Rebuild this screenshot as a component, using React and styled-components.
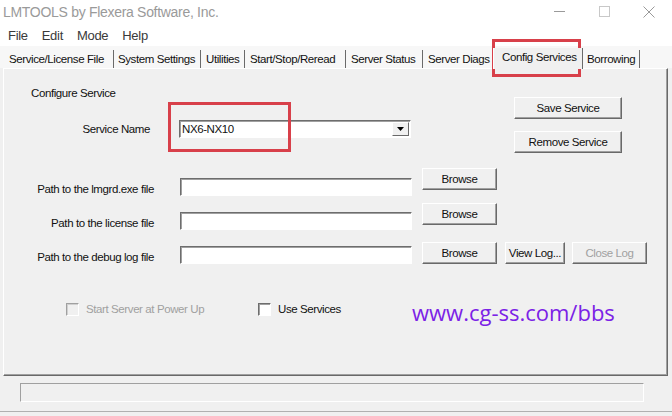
import React from "react";
import styled, { createGlobalStyle } from "styled-components";

const Global = createGlobalStyle`
    html, body {
        margin: 0;
        padding: 0;
        background: #f0f0f0;
    }
    * {
        box-sizing: border-box;
    }
`

const Window = styled.div`
    position: relative;
    width: 672px;
    height: 416px;
    overflow: hidden;
    background: #f0f0f0;
    font-family: "Liberation Sans", Arial, sans-serif;
    font-size: 11.5px;
    letter-spacing: -0.4px;
    color: #111;
`

const TitleBar = styled.div`
    height: 24px;
    display: flex;
    align-items: center;
    background: #fff;
    padding-left: 3px;
`

const Title = styled.span`
    font-size: 14px;
    letter-spacing: -0.3px;
    color: #9a9a9a;
    flex: 1;
`

const Controls = styled.div`
    display: flex;
    align-items: center;
    height: 24px;
    margin-top: -1px;
`

const CtrlBox = styled.div`
    width: ${({ w }) => w}px;
    display: flex;
    justify-content: center;
    align-items: center;
`

const MenuBar = styled.div`
    height: 22px;
    display: flex;
    align-items: center;
    gap: 14px;
    padding-left: 8px;
    background: #fff;
`

const MenuItem = styled.span`
    font-size: 13px;
    letter-spacing: -0.3px;
    color: #3a3a3a;
`

const TabStrip = styled.div`
    height: 22px;
    display: flex;
    align-items: flex-end;
    padding-left: 5px;
    background: #f7f7f7;
`

const Tab = styled.div`
    width: ${({ w }) => w}px;
    height: ${({ active }) => (active ? 21 : 18)}px;
    display: flex;
    align-items: center;
    padding-left: ${({ pl }) => pl}px;
    padding-bottom: ${({ active }) => (active ? 3 : 1)}px;
    border-right: 1px solid #6a6a6a;
    border-left: ${({ active }) => (active ? "1px solid #fff" : "0")};
    background: ${({ active }) => (active ? "#f0f0f0" : "transparent")};
    white-space: nowrap;
    margin-bottom: ${({ active }) => (active ? -1 : 0)}px;
    position: relative;
    z-index: ${({ active }) => (active ? 1 : 0)};
`

const Panel = styled.div`
    margin-left: 3px;
    width: 665px;
    height: 308px;
    border-top: 1px solid #fff;
    border-left: 1px solid #fff;
    border-right: 1px solid #696969;
    border-bottom: 1px solid #696969;
    box-shadow: inset -1px -1px 0 #a0a0a0;
    display: flex;
    flex-direction: column;
`

const TopSection = styled.div`
    display: flex;
    align-items: flex-start;
`

const LeftBlock = styled.div`
    width: 510px;
    display: flex;
    flex-direction: column;
`

const Heading = styled.div`
    margin: 17px 0 0 27px;
    line-height: 14px;
`

const FieldRow = styled.div`
    display: flex;
    align-items: flex-start;
    margin-top: ${({ mt }) => mt}px;
`

const Label = styled.div`
    width: ${({ w }) => w || 150}px;
    text-align: right;
    height: 18px;
    line-height: 18px;
    padding-top: ${({ pt }) => pt || 0}px;
    margin-top: ${({ mt }) => mt || 0}px;
    margin-right: ${({ mr }) => mr || 26}px;
    white-space: nowrap;
`

const Input = styled.div`
    width: 232px;
    height: 18px;
    margin-top: ${({ mt }) => mt || 0}px;
    background: #fff;
    border-top: 1px solid #6d6d6d;
    border-left: 1px solid #6d6d6d;
    border-right: 1px solid #fff;
    border-bottom: 1px solid #fff;
    box-shadow: inset 1px 1px 0 #a0a0a0;
    display: flex;
    align-items: center;
    padding-left: 2px;
`

const ComboText = styled.span`
    flex: 1;
    line-height: 14px;
`

const DropButton = styled.div`
    width: 17px;
    height: 14px;
    margin-right: 1px;
    background: #f0f0f0;
    border-top: 1px solid #fff;
    border-left: 1px solid #fff;
    border-right: 1px solid #696969;
    border-bottom: 1px solid #696969;
    display: flex;
    align-items: center;
    justify-content: center;
`

const ButtonCol = styled.div`
    display: flex;
    flex-direction: column;
    gap: 12px;
    padding-top: 28px;
`

const Button = styled.div`
    width: ${({ w }) => w}px;
    height: 22px;
    margin-left: ${({ ml }) => ml || 0}px;
    background: #f0f0f0;
    border-top: 1px solid #fff;
    border-left: 1px solid #fff;
    border-right: 1px solid #696969;
    border-bottom: 1px solid #696969;
    box-shadow: inset -1px -1px 0 #a0a0a0;
    display: flex;
    align-items: center;
    justify-content: center;
    color: ${({ disabled }) => (disabled ? "#a0a0a0" : "#111")};
    white-space: nowrap;
`

const CheckRow = styled.div`
    display: flex;
    align-items: center;
    margin-top: 38px;
    padding-left: 62px;
    height: 14px;
`

const CheckItem = styled.div`
    display: flex;
    align-items: center;
    gap: 7px;
    width: ${({ w }) => w}px;
    color: ${({ disabled }) => (disabled ? "#a0a0a0" : "#111")};
    white-space: nowrap;
`

const Box = styled.div`
    width: 13px;
    height: 13px;
    flex-shrink: 0;
    background: ${({ disabled }) => (disabled ? "#f0f0f0" : "#fff")};
    border-top: 1px solid ${({ disabled }) => (disabled ? "#a0a0a0" : "#6d6d6d")};
    border-left: 1px solid ${({ disabled }) => (disabled ? "#a0a0a0" : "#6d6d6d")};
    border-right: 1px solid #fff;
    border-bottom: 1px solid #fff;
    box-shadow: inset 1px 1px 0 ${({ disabled }) => (disabled ? "#d0d0d0" : "#a0a0a0")};
`

const Watermark = styled.span`
    font-family: "Open Sans", "Noto Sans", sans-serif;
    font-size: 22px;
    letter-spacing: 0;
    color: #7b22e6;
    margin-top: 6px;
    white-space: nowrap;
`

const StatusArea = styled.div`
    height: 36px;
    padding: 7px 0 0 20px;
    border-bottom: 1px solid #b0b0b0;
`

const StatusField = styled.div`
    width: 624px;
    height: 19px;
    border-top: 1px solid #a0a0a0;
    border-left: 1px solid #a0a0a0;
    border-right: 1px solid #fff;
    border-bottom: 1px solid #fff;
`

const Highlight = styled.div`
    position: absolute;
    left: ${({ x }) => x}px;
    top: ${({ y }) => y}px;
    width: ${({ w }) => w}px;
    height: ${({ h }) => h}px;
    border: 3px solid #d8404a;
    pointer-events: none;
`

const tabs = [
    { label: "Service/License File", w: 109, pl: 4 },
    { label: "System Settings", w: 87, pl: 4 },
    { label: "Utilities", w: 44, pl: 5 },
    { label: "Start/Stop/Reread", w: 101, pl: 5 },
    { label: "Server Status", w: 77, pl: 5 },
    { label: "Server Diags", w: 70, pl: 5 },
    { label: "Config Services", w: 90, pl: 8, active: true },
    { label: "Borrowing", w: 57, pl: 4 },
]

const paths = [
    { label: "Path to the lmgrd.exe file", mt: 15, inMt: 10 },
    { label: "Path to the license file", mt: 7, inMt: 9 },
    { label: "Path to the debug log file", mt: 12, inMt: 4, log: true },
]

const App = () => {
    return (
        <Window>
            <Global />
            <TitleBar>
                <Title>LMTOOLS by Flexera Software, Inc.</Title>
                <Controls>
                    <CtrlBox w={46}>
                        <svg width="11" height="2" viewBox="0 0 11 2">
                            <rect x="0" y="0" width="11" height="1" fill="#9a9a9a" />
                        </svg>
                    </CtrlBox>
                    <CtrlBox w={44}>
                        <svg width="11" height="11" viewBox="0 0 11 11">
                            <rect x="0.5" y="0.5" width="10" height="10" fill="none" stroke="#c8c8c8" />
                        </svg>
                    </CtrlBox>
                    <CtrlBox w={46}>
                        <svg width="12" height="12" viewBox="0 0 12 12">
                            <path d="M0.5 0.5 L11.5 11.5 M11.5 0.5 L0.5 11.5" stroke="#9a9a9a" strokeWidth="1" />
                        </svg>
                    </CtrlBox>
                </Controls>
            </TitleBar>
            <MenuBar>
                <MenuItem>File</MenuItem>
                <MenuItem>Edit</MenuItem>
                <MenuItem>Mode</MenuItem>
                <MenuItem>Help</MenuItem>
            </MenuBar>
            <TabStrip>
                {tabs.map((t) => (
                    <Tab key={t.label} w={t.w} pl={t.pl} active={t.active}>
                        {t.label}
                    </Tab>
                ))}
            </TabStrip>
            <Panel>
                <TopSection>
                    <LeftBlock>
                        <Heading>Configure Service</Heading>
                        <FieldRow mt={20}>
                            <Label w={146} mr={29}>Service Name</Label>
                            <Input>
                                <ComboText>NX6-NX10</ComboText>
                                <DropButton>
                                    <svg width="7" height="4" viewBox="0 0 7 4">
                                        <path d="M0 0 H7 L3.5 4 Z" fill="#000" />
                                    </svg>
                                </DropButton>
                            </Input>
                        </FieldRow>
                    </LeftBlock>
                    <ButtonCol>
                        <Button w={108}>Save Service</Button>
                        <Button w={108}>Remove Service</Button>
                    </ButtonCol>
                </TopSection>
                {paths.map((p) => (
                    <FieldRow key={p.label} mt={p.mt}>
                        <Label mt={p.inMt} pt={2}>{p.label}</Label>
                        <Input mt={p.inMt} />
                        <Button w={75} ml={10}>Browse</Button>
                        {p.log && <Button w={60} ml={8}>View Log...</Button>}
                        {p.log && <Button w={75} ml={7} disabled>Close Log</Button>}
                    </FieldRow>
                ))}
                <CheckRow>
                    <CheckItem w={192} disabled>
                        <Box disabled />
                        Start Server at Power Up
                    </CheckItem>
                    <CheckItem w={154}>
                        <Box />
                        Use Services
                    </CheckItem>
                    <Watermark>www.cg-ss.com/bbs</Watermark>
                </CheckRow>
            </Panel>
            <StatusArea>
                <StatusField />
            </StatusArea>
            <Highlight x={492} y={39} w={89} h={38} />
            <Highlight x={168} y={102} w={123} h={50} />
        </Window>
    );
}

export default App
